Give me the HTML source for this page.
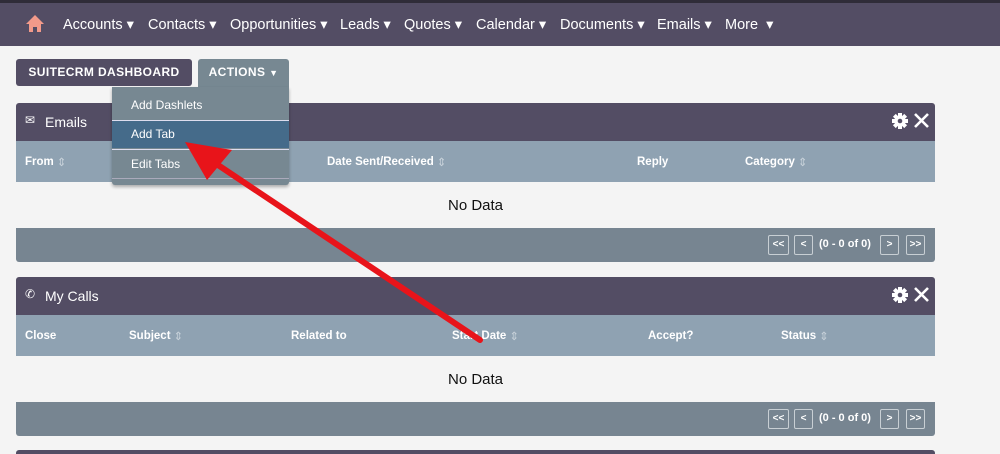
<!DOCTYPE html>
<html style="overflow:hidden;height:454px"><head><style>
*{margin:0;padding:0;box-sizing:border-box}
body{width:1000px;height:454px;background:#f4f4f4;font-family:"Liberation Sans",sans-serif;position:relative;overflow:hidden}
.nav{position:absolute;left:0;top:0;width:1000px;height:46px;background:#534d64;border-top:3px solid #2f2c38}
.nav span{position:absolute;top:14px;color:#fff;font-size:14.5px}
.btn{position:absolute;top:59px;height:27px;color:#fff;font-size:12px;font-weight:bold;letter-spacing:.4px;text-align:center;line-height:27px;border-radius:3px}
.ph{position:absolute;left:16px;width:919px;height:38px;background:#534d64;border-radius:3px 3px 0 0;color:#fff;font-size:14px}
.ch{position:absolute;left:16px;width:919px;height:41px;background:#8fa2b2;color:#fff;font-size:11.5px;font-weight:bold}
.ch span{position:absolute;top:1px;line-height:41px}
.s{color:#c8d2da;font-weight:normal;padding-left:3px}
.nd{position:absolute;width:919px;left:16px;text-align:center;font-size:15px;color:#111}
.ft{position:absolute;left:16px;width:919px;height:34px;background:#778591;border-radius:0 0 3px 3px}
.pb{position:absolute;top:7px;height:20px;border:1px solid #c8cfd4;border-radius:2px;color:#fff;font-size:10px;text-align:center;line-height:18px;font-weight:bold}
.pt{position:absolute;top:10px;left:803px;color:#fff;font-size:11px;font-weight:bold}
.dd{position:absolute;left:112px;top:87px;width:177px;height:98px;background:#778892;border-radius:0 0 3px 3px;box-shadow:0 2px 3px rgba(0,0,0,.3)}
.dd div{position:absolute;left:0;width:177px;color:#fff;font-size:12px;padding-left:19px}
.ic{position:absolute;left:876px;top:8px}
</style></head><body>
<div class="nav">
<svg style="position:absolute;left:25px;top:11px" width="20" height="19" viewBox="0 0 20 19"><path d="M10 1L1 10h3v8h4v-5h4v5h4v-8h3z" fill="#f29a8a"/></svg>
<span style="left:63px">Accounts ▾</span><span style="left:148px">Contacts ▾</span><span style="left:230px">Opportunities ▾</span><span style="left:340px">Leads ▾</span><span style="left:404px">Quotes ▾</span><span style="left:476px">Calendar ▾</span><span style="left:560px">Documents ▾</span><span style="left:657px">Emails ▾</span><span style="left:725px">More &nbsp;▾</span>
</div>
<div class="btn" style="left:16px;width:176px;background:#534d64">SUITECRM DASHBOARD</div>
<div class="btn" style="left:198px;width:91px;background:#778892;border-radius:3px 3px 0 0;height:28px">ACTIONS <span style="font-size:9px">▼</span></div>

<div class="ph" style="top:103px"><span style="position:absolute;left:9px;top:10px;font-size:12px">✉</span><span style="position:absolute;left:29px;top:11px">Emails</span>
<svg class="ic" width="44" height="20" viewBox="0 0 44 20"><g transform="translate(8,10)" fill="#fff"><circle r="5.5"/><rect x="-2" y="-8" width="4" height="16"/><rect x="-8" y="-2" width="16" height="4"/><rect x="-2" y="-8" width="4" height="16" transform="rotate(45)"/><rect x="-2" y="-8" width="4" height="16" transform="rotate(-45)"/><circle r="2.3" fill="#534d64"/></g><path d="M23 3l13 13M36 3L23 16" stroke="#fff" stroke-width="2.6"/></svg></div>
<div class="ch" style="top:141px"><span style="left:9px">From <span class="s">⇕</span></span><span style="left:311px">Date Sent/Received <span class="s">⇕</span></span><span style="left:621px">Reply</span><span style="left:729px">Category <span class="s">⇕</span></span></div>
<div class="nd" style="top:197px">No Data</div>
<div class="ft" style="top:228px"><div class="pb" style="left:752px;width:21px">&lt;&lt;</div><div class="pb" style="left:778px;width:19px">&lt;</div><div class="pt">(0 - 0 of 0)</div><div class="pb" style="left:864px;width:19px">&gt;</div><div class="pb" style="left:890px;width:19px">&gt;&gt;</div></div>

<div class="ph" style="top:277px"><span style="position:absolute;left:9px;top:10px;font-size:12px">✆</span><span style="position:absolute;left:29px;top:11px">My Calls</span>
<svg class="ic" width="44" height="20" viewBox="0 0 44 20"><g transform="translate(8,10)" fill="#fff"><circle r="5.5"/><rect x="-2" y="-8" width="4" height="16"/><rect x="-8" y="-2" width="16" height="4"/><rect x="-2" y="-8" width="4" height="16" transform="rotate(45)"/><rect x="-2" y="-8" width="4" height="16" transform="rotate(-45)"/><circle r="2.3" fill="#534d64"/></g><path d="M23 3l13 13M36 3L23 16" stroke="#fff" stroke-width="2.6"/></svg></div>
<div class="ch" style="top:315px"><span style="left:9px">Close</span><span style="left:113px">Subject <span class="s">⇕</span></span><span style="left:275px">Related to</span><span style="left:436px">Start Date <span class="s">⇕</span></span><span style="left:632px">Accept?</span><span style="left:765px">Status <span class="s">⇕</span></span></div>
<div class="nd" style="top:371px">No Data</div>
<div class="ft" style="top:402px"><div class="pb" style="left:752px;width:21px">&lt;&lt;</div><div class="pb" style="left:778px;width:19px">&lt;</div><div class="pt">(0 - 0 of 0)</div><div class="pb" style="left:864px;width:19px">&gt;</div><div class="pb" style="left:890px;width:19px">&gt;&gt;</div></div>
<div class="ph" style="top:450px;height:4px"></div>

<div class="dd">
<div style="top:11px">Add Dashlets</div>
<div style="top:33px;height:1px;background:#dde;padding:0"></div>
<div style="top:34px;height:27px;background:#456b8a;line-height:27px">Add Tab</div>
<div style="top:62px;height:1px;background:#dde;padding:0"></div>
<div style="top:70px">Edit Tabs</div>
<div style="top:91px;height:1px;background:#aab;padding:0"></div>
</div>
<svg style="position:absolute;left:0;top:0" width="1000" height="454"><path d="M480 340L215 163" stroke="#e8141a" stroke-width="6" stroke-linecap="round"/><path d="M185 142L232 150L207 180Z" fill="#e8141a"/></svg>
</body></html>
